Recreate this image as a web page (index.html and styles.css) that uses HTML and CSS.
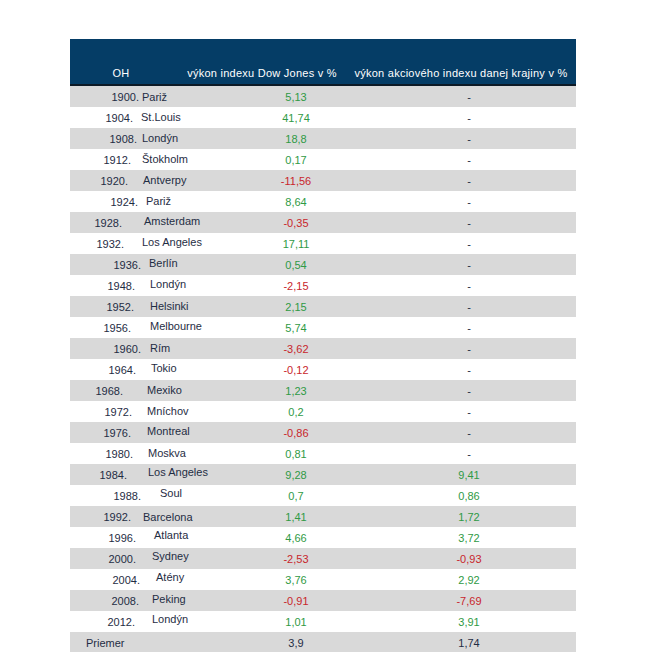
FILE: index.html
```html
<!DOCTYPE html>
<html>
<head>
  <title>OH a výkon akciových indexov</title>
  <link rel="stylesheet" href="styles.css">
</head>
<body>
  <div class="page">
    <div class="oh-table">
      <div class="head-row">
        <div class="head-cell">OH</div>
        <div class="head-cell">výkon indexu Dow Jones v %</div>
        <div class="head-cell last">výkon akciového indexu danej krajiny v %</div>
      </div>
      <div id="rows"></div>
    </div>
  </div>

  <script>
    // year, city, dow jones, local index, year right edge, city left edge, city raised
    const games = [
      ['1900.', 'Pariž', '5,13', '-', 139, 142, 0],
      ['1904.', 'St.Louis', '41,74', '-', 133, 141, 1],
      ['1908.', 'Londýn', '18,8', '-', 137, 142, 1],
      ['1912.', 'Štokholm', '0,17', '-', 131, 142, 1],
      ['1920.', 'Antverpy', '-11,56', '-', 128, 143, 1],
      ['1924.', 'Pariž', '8,64', '-', 138, 146, 1],
      ['1928.', 'Amsterdam', '-0,35', '-', 122, 144, 2],
      ['1932.', 'Los Angeles', '17,11', '-', 124, 142, 2],
      ['1936.', 'Berlín', '0,54', '-', 141, 149, 2],
      ['1948.', 'Londýn', '-2,15', '-', 135, 150, 2],
      ['1952.', 'Helsinki', '2,15', '-', 134, 150, 1],
      ['1956.', 'Melbourne', '5,74', '-', 131, 150, 2],
      ['1960.', 'Rím', '-3,62', '-', 141, 150, 1],
      ['1964.', 'Tokio', '-0,12', '-', 136, 151, 2],
      ['1968.', 'Mexiko', '1,23', '-', 123, 147, 1],
      ['1972.', 'Mníchov', '0,2', '-', 132, 147, 1],
      ['1976.', 'Montreal', '-0,86', '-', 131, 147, 2],
      ['1980.', 'Moskva', '0,81', '-', 133, 148, 1],
      ['1984.', 'Los Angeles', '9,28', '9,41', 127, 148, 3],
      ['1988.', 'Soul', '0,7', '0,86', 141, 160, 3],
      ['1992.', 'Barcelona', '1,41', '1,72', 131, 143, 0],
      ['1996.', 'Atlanta', '4,66', '3,72', 136, 154, 3],
      ['2000.', 'Sydney', '-2,53', '-0,93', 136, 152, 3],
      ['2004.', 'Atény', '3,76', '2,92', 140, 156, 3],
      ['2008.', 'Peking', '-0,91', '-7,69', 139, 152, 2],
      ['2012.', 'Londýn', '1,01', '3,91', 135, 152, 3]
    ];

    const tableLeft = 70;
    const rows = document.getElementById('rows');

    function valueClass(v) {
      if (v === '-') return 'val dash';
      return v.startsWith('-') ? 'val neg' : 'val pos';
    }

    games.forEach(([year, city, dj, local, yearRight, cityLeft, raise]) => {
      const row = document.createElement('div');
      row.className = 'data-row';
      row.innerHTML =
        `<div class="oh-cell">` +
          `<span class="year" style="width:${yearRight - tableLeft}px">${year}</span>` +
          `<span class="city" style="margin-left:${cityLeft - yearRight}px;top:-${raise}px">${city}</span>` +
        `</div>` +
        `<div class="${valueClass(dj)}">${dj}</div>` +
        `<div class="${valueClass(local)}">${local}</div>`;
      rows.appendChild(row);
    });

    const avg = document.createElement('div');
    avg.className = 'data-row average';
    avg.innerHTML = `<div class="oh-cell"><span class="avg-label">Priemer</span></div>` +
      `<div class="val">3,9</div><div class="val">1,74</div>`;
    rows.appendChild(avg);
  </script>
</body>
</html>
```

FILE: styles.css
```css
body {
  margin: 0;
  background-color: #fff;
  font-family: "Liberation Sans", Arial, sans-serif;
  font-size: 11px;
  color: #1f2d44;
}
.page {
  padding: 39px 0 0 70px;
}
.oh-table {
  width: 506px;
}
.head-row {
  display: grid;
  grid-template-columns: 102px 180px 224px;
  align-items: end;
  height: 45px;
  background-color: #053d66;
  border-bottom: 2px solid #0d1a26;
  color: #fff;
}
.head-cell {
  text-align: center;
  padding-bottom: 5px;
  white-space: nowrap;
  letter-spacing: 0.25px;
}
.head-cell.last {
  padding-right: 6px;
}
.data-row {
  display: grid;
  grid-template-columns: 160px 132px 214px;
  align-items: center;
  height: 21px;
}
.data-row:nth-child(odd) {
  background-color: #d9d9d9;
}
.oh-cell {
  display: flex;
  align-items: center;
  white-space: nowrap;
}
.year {
  display: inline-block;
  text-align: right;
  flex-shrink: 0;
}
.city {
  position: relative;
}
.avg-label {
  padding-left: 16px;
}
.val {
  text-align: center;
}
.val.pos { color: #2f9a45; }
.val.neg { color: #c8262c; }
.val.dash { color: #1f2d44; }
```
